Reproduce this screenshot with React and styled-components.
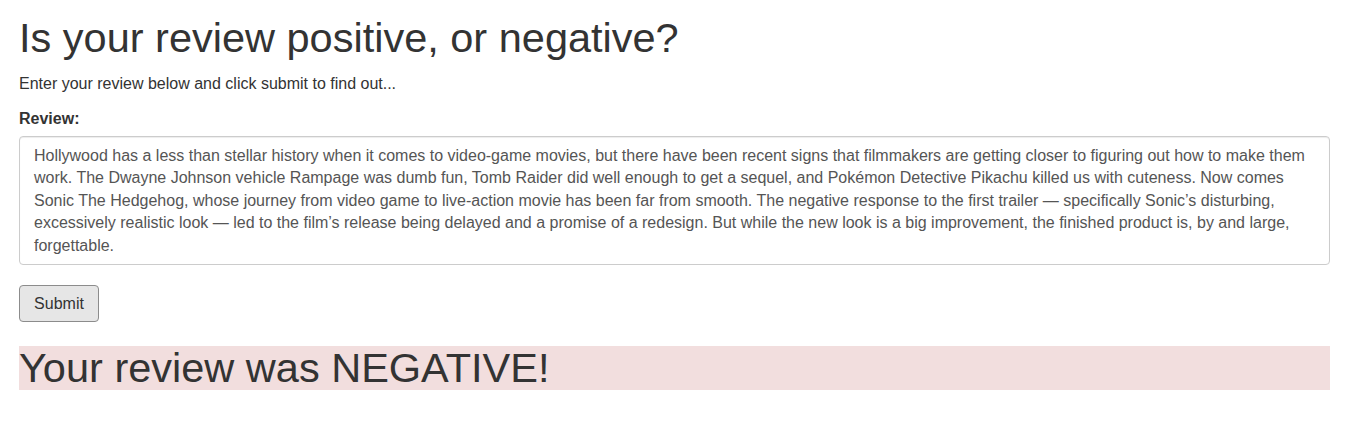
import React, { useState } from "react"
import styled, { createGlobalStyle } from "styled-components"

const GlobalStyle = createGlobalStyle`
  body {
    margin: 0;
    background: #fff;
    font-family: "Liberation Sans", Arial, sans-serif;
    font-size: 16px;
    color: #333;
  }
`

const Page = styled.div`
  padding: 0 24px 0 19px;
`

const Title = styled.h1`
  margin: 0;
  padding-top: 12px;
  font-size: 41.5px;
  font-weight: 400;
  line-height: 52px;
`

const Intro = styled.p`
  margin: 10px 0 0;
  font-size: 16px;
  line-height: 20px;
`

const Label = styled.label`
  display: block;
  margin-top: 15px;
  font-size: 16px;
  font-weight: 700;
  line-height: 20px;
`

const Review = styled.textarea`
  display: block;
  box-sizing: border-box;
  width: 100%;
  height: 129px;
  margin-top: 7px;
  padding: 8px 14px;
  border: 1px solid #ccc;
  border-radius: 4px;
  box-shadow: inset 0 1px 1px rgba(0, 0, 0, 0.075);
  font-family: "Liberation Sans", Arial, sans-serif;
  font-size: 16px;
  line-height: 22.4px;
  color: #555;
  resize: none;
`

const SubmitButton = styled.button`
  display: block;
  margin-top: 20px;
  width: 80px;
  height: 37px;
  padding: 0;
  background: #e6e6e6;
  border: 1px solid #8c8c8c;
  border-radius: 4px;
  font-family: "Liberation Sans", Arial, sans-serif;
  font-size: 16px;
  color: #333;
`

const Result = styled.div`
  margin-top: 24px;
  background: #f2dede;
  font-size: 41.5px;
  line-height: 44px;
`

const reviewText =
  "Hollywood has a less than stellar history when it comes to video-game movies, but there have been recent signs that filmmakers are getting closer to figuring out how to make them work. The Dwayne Johnson vehicle Rampage was dumb fun, Tomb Raider did well enough to get a sequel, and Pokémon Detective Pikachu killed us with cuteness. Now comes Sonic The Hedgehog, whose journey from video game to live-action movie has been far from smooth. The negative response to the first trailer — specifically Sonic’s disturbing, excessively realistic look — led to the film’s release being delayed and a promise of a redesign. But while the new look is a big improvement, the finished product is, by and large, forgettable."

export default function App() {
  const [review, setReview] = useState(reviewText)
  return (
    <>
      <GlobalStyle />
      <Page>
        <Title>Is your review positive, or negative?</Title>
        <Intro>Enter your review below and click submit to find out...</Intro>
        <Label htmlFor="review">Review:</Label>
        <Review
          id="review"
          value={review}
          onChange={e => setReview(e.target.value)}
        />
        <SubmitButton type="submit">Submit</SubmitButton>
        <Result>Your review was NEGATIVE!</Result>
      </Page>
    </>
  )
}
